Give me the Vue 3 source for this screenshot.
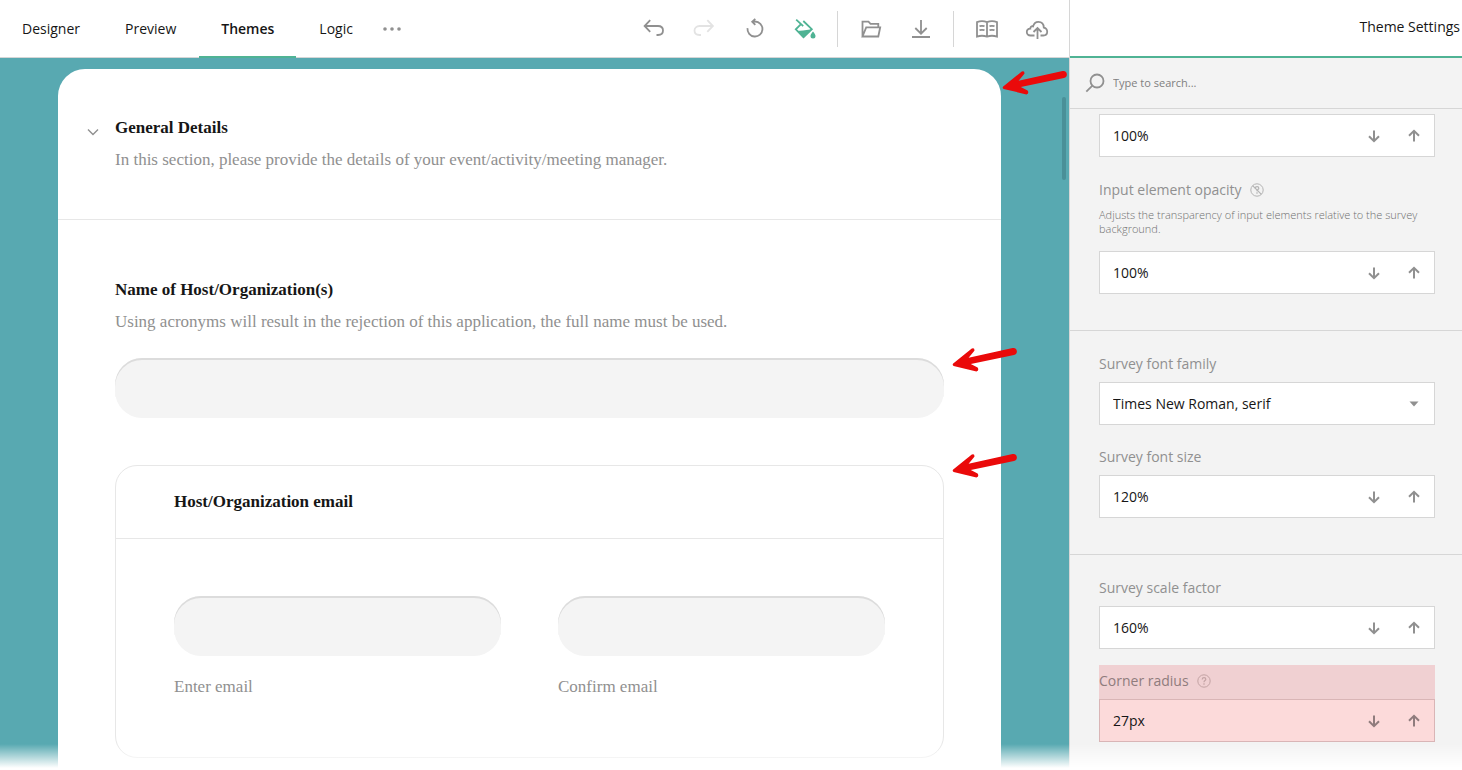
<script setup>
import { ref } from 'vue'

const tabs = ['Designer', 'Preview', 'Themes', 'Logic']
const activeTab = ref('Themes')

const actions = [
  [
    { name: 'Undo', paths: ['M7.2 3.2 1.6 9l5.6 5.8M1.8 9H15c3 0 5 1.9 5 4.6S18 18 15 18h-1.5'] },
    { name: 'Redo', disabled: true, paths: ['M14.3 3.2 19.9 9l-5.6 5.8M19.7 9H6.5c-3 0-5 1.9-5 4.6S3.5 18 6.5 18H8'] },
    { name: 'Reset', paths: ['M4.5 11.2A7.5 7.5 0 1 0 12 4.5H9.5M12.3 1.8 9.2 4.7l3.1 3.2'] },
    {
      name: 'Theme colors',
      accent: true,
      paths: ['M3.2 2.6 10.2 9.2M10.3 4 18.8 12.2 10.5 20.2 2.8 12.3 8 7.2'],
      solid: 'M4 14 10 13.6 19 12.3 10.5 21ZM20 14.5c1.5 2 2.5 3 2.5 4.5a2.5 2.5 0 0 1-5 0c0-1.5 1-2.5 2.5-4.5Z'
    }
  ],
  [
    { name: 'Open', paths: ['M3.5 19.5V4.6h6l2 2.2h7.8V10M3.5 19.5 7.2 10.3h14L19.3 19.5Z'] },
    { name: 'Download', paths: ['M12 3v13.5M6.3 11l5.7 5.7 5.7-5.7M3 20h18'] }
  ],
  [
    { name: 'Documentation', paths: ['M2 19.6V5.2c3-1.2 7-1.2 10 0 3-1.2 7-1.2 10 0v14.4c-3-1-7-1-10 0-3-1-7-1-10 0ZM12 5v14.6M4.5 9.2c1.5-.4 3.5-.4 5 0M4.5 13.2c1.5-.4 3.5-.4 5 0M14.5 9.2c1.5-.4 3.5-.4 5 0M14.5 13.2c1.5-.4 3.5-.4 5 0'] },
    { name: 'Publish', paths: ['M9.5 18.5h-4c-2.2 0-3.7-1.4-3.7-3.4 0-2 1.4-3.4 3.5-3.5-.2-1.7 1.2-2.7 2.8-2.2.7-2.8 2.7-4.5 5.3-4.5 3.3 0 5.3 2.3 5.4 5.7 2.2.4 3.4 2 3.4 4.2 0 2.3-1.5 3.7-3.9 3.7h-2.8M12.5 22V11M8.5 15l4-4 4 4'] }
  ]
]

const sections = ref([
  [
    { id: 'panel-opacity', value: '100%' },
    {
      id: 'input-opacity',
      label: 'Input element opacity',
      hint: 'off',
      note: 'Adjusts the transparency of input elements relative to the survey background.',
      value: '100%'
    }
  ],
  [
    { id: 'font-family', label: 'Survey font family', select: true, value: 'Times New Roman, serif' },
    { id: 'font-size', label: 'Survey font size', value: '120%' }
  ],
  [
    { id: 'scale', label: 'Survey scale factor', value: '160%' },
    { id: 'radius', label: 'Corner radius', hint: 'on', marked: true, value: '27px' }
  ]
])

const pointer =
  'M2.2 17.4 20.8 2.6Q23.8 1.4 23.4 4.8L17.6 11.8 61.6 2A3.5 3.5 0 0 1 63 8.9L19.8 18 26.6 21.6Q28.4 24.6 25.4 25.4L2.6 19.9Q1 18.8 2.2 17.4Z'

function step(field, delta) {
  const unit = field.value.replace(/[\d.-]/g, '')
  field.value = parseInt(field.value || '0', 10) + delta + unit
}
</script>

<template>
  <div class="app">
    <div class="workspace">
      <header class="toolbar">
        <nav class="tabs">
          <button
            v-for="tab in tabs"
            :key="tab"
            class="tab"
            :class="{ active: tab === activeTab }"
            @click="activeTab = tab"
          >{{ tab }}</button>
          <button class="more" aria-label="More">
            <svg width="20" height="6" viewBox="0 0 20 6" fill="#909090">
              <circle cx="3" cy="3" r="1.8" /><circle cx="10" cy="3" r="1.8" /><circle cx="17" cy="3" r="1.8" />
            </svg>
          </button>
        </nav>
        <div class="actions">
          <div v-for="(group, i) in actions" :key="i" class="group">
            <button
              v-for="a in group"
              :key="a.name"
              class="action"
              :class="{ accent: a.accent, faint: a.disabled }"
              :disabled="a.disabled"
              :aria-label="a.name"
            >
              <svg width="24" height="24" viewBox="0 0 24 24">
                <path v-for="p in a.paths" :key="p" :d="p" fill="none" stroke="currentColor" stroke-width="1.8" />
                <path v-if="a.solid" :d="a.solid" fill="currentColor" />
              </svg>
            </button>
          </div>
        </div>
      </header>

      <main class="canvas">
        <form class="card" @submit.prevent>
          <svg class="pointer at-card" width="66" height="28" viewBox="0 0 66 28"><path :d="pointer" /></svg>
          <div class="page-head">
            <button type="button" class="collapse" aria-label="Collapse">
              <svg width="12" height="8" viewBox="0 0 12 8">
                <path d="M1 1.5 6 6.5 11 1.5" fill="none" stroke="#909090" stroke-width="1.4" />
              </svg>
            </button>
            <div>
              <h2 class="title">General Details</h2>
              <p class="text">In this section, please provide the details of your event/activity/meeting manager.</p>
            </div>
          </div>
          <div class="page-body">
            <div class="question">
              <label class="title" for="host">Name of Host/Organization(s)</label>
              <p class="text">Using acronyms will result in the rejection of this application, the full name must be used.</p>
              <div class="answer">
                <input id="host" class="box" type="text" />
                <svg class="pointer at-input" width="66" height="28" viewBox="0 0 66 28"><path :d="pointer" /></svg>
              </div>
            </div>
            <section class="panel">
              <svg class="pointer at-panel" width="66" height="28" viewBox="0 0 66 28"><path :d="pointer" /></svg>
              <h3 class="title panel-title">Host/Organization email</h3>
              <div class="panel-body">
                <div class="cell">
                  <input id="email" class="box" type="email" />
                  <label class="text" for="email">Enter email</label>
                </div>
                <div class="cell">
                  <input id="confirm" class="box" type="email" />
                  <label class="text" for="confirm">Confirm email</label>
                </div>
              </div>
            </section>
          </div>
        </form>
        <div class="thumb"></div>
      </main>
    </div>

    <aside class="settings">
      <h1 class="settings-title">Theme Settings</h1>
      <div class="search">
        <svg width="20" height="20" viewBox="0 0 20 20" fill="none" stroke="#909090" stroke-width="1.8">
          <circle cx="12" cy="8" r="6.5" /><path d="M7.4 12.6 1.3 18.7" />
        </svg>
        <input type="search" placeholder="Type to search..." aria-label="Type to search" />
      </div>
      <section v-for="(fields, i) in sections" :key="i" class="section">
        <div v-for="f in fields" :key="f.id" class="field" :class="{ marked: f.marked }">
          <div v-if="f.label" class="caption">
            <label :for="f.id">{{ f.label }}</label>
            <svg v-if="f.hint" width="14" height="14" viewBox="0 0 14 14" fill="none" stroke="currentColor">
              <circle cx="7" cy="7" r="6.2" />
              <path d="M5.2 5.5C5.3 3 8.8 3.2 8.8 5.3 8.8 6.6 7 6.6 7 8.2M7 9.3v1.4" stroke-width="1.2" />
              <path v-if="f.hint === 'off'" d="M2.6 2.6 11.4 11.4" stroke-width="1.2" />
            </svg>
          </div>
          <p v-if="f.note" class="note">{{ f.note }}</p>
          <div v-if="f.select" class="control">
            <select :id="f.id" v-model="f.value">
              <option>Times New Roman, serif</option>
              <option>Open Sans</option>
            </select>
            <svg class="caret" width="10" height="6" viewBox="0 0 10 6"><path d="M0.5 0.5h9L5 5.5Z" fill="#909090" /></svg>
          </div>
          <div v-else class="control">
            <input :id="f.id" v-model="f.value" type="text" :aria-label="f.label || 'Panel opacity'" />
            <button class="step" aria-label="Decrease" @click="step(f, -1)">
              <svg width="14" height="14" viewBox="0 0 14 14"><path d="M7 1.5v10.5M2 7.2l5 5 5-5" /></svg>
            </button>
            <button class="step" aria-label="Increase" @click="step(f, 1)">
              <svg width="14" height="14" viewBox="0 0 14 14"><path d="M7 12.5V2M2 6.8l5-5 5 5" /></svg>
            </button>
          </div>
        </div>
      </section>
    </aside>
    <div class="fade"></div>
  </div>
</template>

<style>
body {
  margin: 0;
}
</style>

<style scoped>
.app {
  position: relative;
  display: grid;
  grid-template-columns: minmax(0, 1fr) 393px;
  height: 100vh;
  overflow: hidden;
  background: #fff;
  color: #161616;
  font: 14px/20px "Open Sans", sans-serif;
}
.app * {
  box-sizing: border-box;
}
button,
input,
select {
  font: inherit;
  color: inherit;
  background: none;
  border: 0;
  border-radius: 0;
  padding: 0;
  margin: 0;
  outline: 0;
  appearance: none;
}
svg {
  display: block;
}
h1,
h2,
h3,
p {
  margin: 0;
}
.workspace {
  display: flex;
  flex-direction: column;
  min-height: 0;
}
.toolbar {
  display: flex;
  justify-content: space-between;
  height: 58px;
  flex: none;
  border-bottom: 1px solid #d6d6d6;
}
.tabs,
.actions,
.group {
  display: flex;
}
.tabs {
  gap: 1px;
}
.tab {
  height: 58px;
  padding: 2px 22px 0;
  border-bottom: 2px solid transparent;
}
.tab.active {
  font-weight: 600;
  border-color: #4fb394;
}
.more {
  padding: 0 6px;
}
.actions {
  padding-right: 7px;
}
.group + .group::before {
  content: "";
  width: 1px;
  margin: 11px 8px 10px 7px;
  background: #d6d6d6;
}
.action {
  width: 50px;
  padding: 17px 13px 16px;
  color: #909090;
}
.action.faint {
  color: #e3e3e3;
}
.action.accent {
  color: #4fb394;
}
.canvas {
  position: relative;
  flex: 1;
  min-height: 0;
  padding: 11px 68px 0 58px;
  background: #58a9b1;
}
.card {
  position: relative;
  height: 100%;
  background: #fff;
  border-radius: 27px 27px 0 0;
  font: 17px/24px "Liberation Serif", serif;
}
.page-head {
  display: flex;
  gap: 11px;
  padding: 47px 57px 47px 24px;
  border-bottom: 1px solid #e7e7e7;
}
.collapse {
  display: flex;
  justify-content: center;
  width: 22px;
  height: 24px;
  padding-top: 12px;
}
.title {
  display: block;
  font-size: 17px;
  line-height: 24px;
  font-weight: 700;
}
.text {
  color: #909090;
}
.title + .text {
  margin-top: 8px;
}
.page-body {
  padding: 58px 57px;
}
.answer {
  position: relative;
  margin-top: 24px;
}
.box {
  display: block;
  width: 100%;
  height: 60px;
  padding: 0 24px;
  border-radius: 27px;
  background: #f4f4f4;
  box-shadow: inset 0 2px 0 #dcdcdc;
}
.panel {
  position: relative;
  margin-top: 47px;
  border: 1px solid #e7e7e7;
  border-radius: 22px;
}
.panel-title {
  padding: 24px 58px;
  border-bottom: 1px solid #e7e7e7;
}
.panel-body {
  display: grid;
  grid-template-columns: 1fr 1fr;
  gap: 57px;
  padding: 57px 58px 58px;
}
.cell {
  display: flex;
  flex-direction: column;
  gap: 19px;
}
.pointer {
  position: absolute;
  z-index: 2;
  fill: #ea0a0a;
}
.at-card {
  left: 100%;
  top: 0;
}
.at-input {
  left: calc(100% + 7px);
  top: -12px;
}
.at-panel {
  left: calc(100% + 8px);
  top: -14px;
}
.thumb {
  position: absolute;
  right: 3px;
  top: 39px;
  width: 4px;
  height: 83px;
  border-radius: 2px;
  background: #4a9098;
}
.settings {
  border-left: 1px solid #d6d6d6;
  background: #f3f3f3;
}
.settings-title {
  height: 58px;
  padding-right: 2px;
  border-bottom: 2px solid #4fb394;
  background: #fff;
  font-size: 14px;
  font-weight: 400;
  line-height: 54px;
  text-align: right;
}
.search {
  display: flex;
  align-items: center;
  gap: 8px;
  height: 51px;
  padding: 0 15px;
  border-bottom: 1px solid #d6d6d6;
}
.search input {
  flex: 1;
  font-size: 11px;
}
.search input::placeholder {
  color: #808080;
  opacity: 1;
}
.section {
  padding: 23px 27px 36px 29px;
}
.search + .section {
  padding-top: 5px;
}
.section + .section {
  border-top: 1px solid #d6d6d6;
}
.field + .field {
  margin-top: 16px;
}
.field + .field .caption {
  padding-top: 6px;
}
.search + .section .field + .field {
  margin-top: 17px;
}
.caption {
  display: flex;
  align-items: center;
  gap: 8px;
  padding-bottom: 8px;
  color: #909090;
}
.caption svg {
  color: #b4b4b4;
}
.note {
  padding-bottom: 15px;
  font-size: 11px;
  font-weight: 300;
  line-height: 14px;
  color: #707070;
}
.control {
  position: relative;
  display: flex;
  height: 43px;
  border: 1px solid #d6d6d6;
  background: #fff;
}
.control input,
.control select {
  flex: 1;
  min-width: 0;
  padding: 0 13px;
}
.caret {
  position: absolute;
  right: 15px;
  top: 18px;
  pointer-events: none;
}
.step {
  display: flex;
  align-items: center;
  justify-content: center;
  width: 40px;
}
.step path {
  fill: none;
  stroke: #909090;
  stroke-width: 2;
}
.marked .caption {
  background: #f0d0d2;
  color: #8f7c7d;
}
.marked .caption svg {
  color: #c3a3a4;
}
.marked .control {
  background: #fcdada;
  border-color: #d9b5b6;
}
.marked .step path {
  stroke: #8f7c7d;
}
.fade {
  position: absolute;
  z-index: 3;
  left: 0;
  right: 0;
  bottom: 0;
  height: 26px;
  background: linear-gradient(to bottom, transparent, #fff 24px);
  pointer-events: none;
}
</style>
